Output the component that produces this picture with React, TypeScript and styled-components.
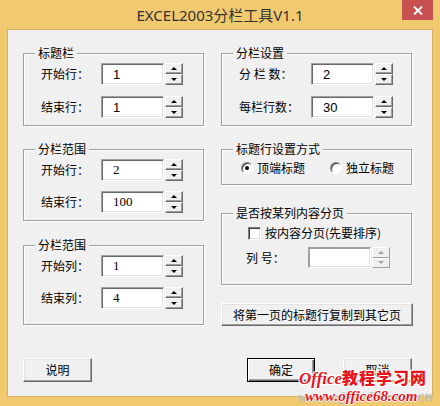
import React from "react";
import styled, { createGlobalStyle } from "styled-components";

const Global = createGlobalStyle`
  html, body { margin: 0; padding: 0; background: #ffffff; }
  body {
    font-family: "Noto Sans CJK SC", "Noto Sans", sans-serif;
    font-size: 12px;
    color: #000000;
  }
`;

const Window = styled.div`
  position: relative;
  width: 440px;
  height: 406px;
  box-sizing: border-box;
  background: #f1c96f;
  display: flex;
  flex-direction: column;
  padding: 0 7px 9px 7px;
`;

const TitleBar = styled.div`
  height: 29px;
  display: grid;
  grid-template-columns: 31px 1fr 31px;
  align-items: start;
  flex-shrink: 0;
`;

const TitleText = styled.div`
  grid-column: 2;
  height: 29px;
  display: flex;
  align-items: center;
  justify-content: center;
  font-family: "Noto Sans", "Noto Sans CJK SC", sans-serif;
  font-size: 15px;
  color: #333333;
`;

const CloseButton = styled.div`
  grid-column: 3;
  height: 20px;
  background: #c75050;
  display: flex;
  align-items: center;
  justify-content: center;
`;

const Client = styled.div`
  flex: 1;
  background: #f0f0f0;
  border: 1px solid #d6b266;
  display: flex;
  flex-direction: column;
  padding: 23px 20px 0 15px;
`;

const Columns = styled.div`
  display: flex;
  gap: 17px;
  align-items: flex-start;
`;

const Column = styled.div<{ $w: number }>`
  width: ${(p) => p.$w}px;
  display: flex;
  flex-direction: column;
`;

const Group = styled.div<{ $h: number; $mt?: number; $pt: number; $pl: number; $gap?: number }>`
  position: relative;
  box-sizing: border-box;
  height: ${(p) => p.$h}px;
  margin-top: ${(p) => p.$mt ?? 0}px;
  border: 1px solid #a0a0a0;
  box-shadow: inset 1px 1px 0 #ffffff, 1px 1px 0 #ffffff;
  padding: ${(p) => p.$pt}px 0 0 ${(p) => p.$pl}px;
  display: flex;
  flex-direction: column;
  gap: ${(p) => p.$gap ?? 0}px;
`;

const Legend = styled.span`
  position: absolute;
  top: -9px;
  left: 11px;
  padding: 0 3px;
  line-height: 16px;
  background: #f0f0f0;
  white-space: nowrap;
`;

const Row = styled.div<{ $h?: number; $ml?: number; $mt?: number }>`
  display: flex;
  align-items: center;
  height: ${(p) => p.$h ?? 22}px;
  margin-left: ${(p) => p.$ml ?? 0}px;
  margin-top: ${(p) => p.$mt ?? 0}px;
`;

const Label = styled.span<{ $w: number }>`
  width: ${(p) => p.$w}px;
  flex-shrink: 0;
  white-space: pre;
  line-height: 16px;
`;

const Edit = styled.div<{ $serif?: boolean; $h?: number; $disabled?: boolean }>`
  box-sizing: border-box;
  width: 63px;
  height: ${(p) => p.$h ?? 22}px;
  background: #ffffff;
  border-style: solid;
  border-width: 1px;
  border-color: #a0a0a0 #ffffff #ffffff #a0a0a0;
  box-shadow: ${(p) =>
    p.$disabled
      ? "inset 1px 1px 0 #a0a0a0, inset -1px -1px 0 #e3e3e3"
      : "inset 1px 1px 0 #696969, inset -1px -1px 0 #e3e3e3"};
  padding-left: 11px;
  display: flex;
  align-items: center;
  font-family: ${(p) =>
    p.$serif ? `"Liberation Serif", "DejaVu Serif", serif` : `"Liberation Sans", Arial, sans-serif`};
  font-size: 13px;
`;

const Spin = styled.div<{ $h?: number }>`
  width: 18px;
  height: ${(p) => p.$h ?? 22}px;
  margin-left: 1px;
  display: flex;
  flex-direction: column;
`;

const SpinHalf = styled.div<{ $disabled?: boolean }>`
  flex: 1;
  box-sizing: border-box;
  background: #f0f0f0;
  border-style: solid;
  border-width: 1px;
  border-color: ${(p) =>
    p.$disabled ? "#ffffff #a0a0a0 #a0a0a0 #ffffff" : "#ffffff #696969 #696969 #ffffff"};
  box-shadow: ${(p) => (p.$disabled ? "none" : "inset -1px -1px 0 #a0a0a0")};
  display: flex;
  align-items: center;
  justify-content: center;
`;

const Arrow = styled.span<{ $up: boolean; $disabled?: boolean }>`
  width: 0;
  height: 0;
  border-left: 3px solid transparent;
  border-right: 3px solid transparent;
  ${(p) =>
    p.$up
      ? `border-bottom: 3px solid ${p.$disabled ? "#a0a0a0" : "#000"};`
      : `border-top: 3px solid ${p.$disabled ? "#a0a0a0" : "#000"};`}
`;

const RadioCircle = styled.span<{ $checked?: boolean }>`
  box-sizing: border-box;
  width: 12px;
  height: 12px;
  border-radius: 50%;
  border: 1px solid;
  border-color: #808080 #ffffff #ffffff #808080;
  background: #ffffff;
  box-shadow: inset 1px 1px 0 #404040;
  display: flex;
  align-items: center;
  justify-content: center;
  flex-shrink: 0;
  &::after {
    content: "";
    width: 4px;
    height: 4px;
    border-radius: 50%;
    background: ${(p) => (p.$checked ? "#000" : "transparent")};
  }
`;

const Option = styled.span<{ $ml?: number }>`
  display: flex;
  align-items: center;
  gap: 4px;
  margin-left: ${(p) => p.$ml ?? 0}px;
  line-height: 16px;
`;

const CheckBox = styled.span`
  box-sizing: border-box;
  width: 13px;
  height: 13px;
  background: #ffffff;
  border: 1px solid;
  border-color: #808080 #ffffff #ffffff #808080;
  box-shadow: inset 1px 1px 0 #404040, inset -1px -1px 0 #e3e3e3;
  flex-shrink: 0;
`;

const Button = styled.div<{ $w: number; $h: number; $mt?: number; $default?: boolean; $ml?: number }>`
  box-sizing: border-box;
  width: ${(p) => p.$w}px;
  height: ${(p) => p.$h}px;
  margin-top: ${(p) => p.$mt ?? 0}px;
  margin-left: ${(p) => p.$ml ?? 0}px;
  background: #f0f0f0;
  border: 1px solid;
  border-color: ${(p) => (p.$default ? "#000 #000 #000 #000" : "#ffffff #696969 #696969 #ffffff")};
  box-shadow: ${(p) =>
    p.$default
      ? "inset 1px 1px 0 #ffffff, inset -1px -1px 0 #696969, inset -2px -2px 0 #a0a0a0"
      : "inset -1px -1px 0 #a0a0a0, inset 1px 1px 0 #e3e3e3"};
  display: flex;
  align-items: center;
  justify-content: center;
  line-height: 16px;
  white-space: nowrap;
`;

const BottomBar = styled.div`
  display: flex;
  align-items: flex-start;
  margin-top: 32px;
`;

const Spacer = styled.div`
  flex: 1;
`;

const Watermark = styled.div`
  position: absolute;
  left: 299px;
  top: 368px;
  display: flex;
  flex-direction: column;
  pointer-events: none;
`;

const MarkMain = styled.div`
  font-family: "Liberation Serif", "Noto Sans CJK SC", serif;
  font-weight: bold;
  font-style: italic;
  font-size: 17px;
  line-height: 18px;
  color: #e8141e;
  white-space: nowrap;
  text-shadow: 1px 1px 0 #ffffff, -1px -1px 0 #ffffff, 1px -1px 0 #ffffff, -1px 1px 0 #ffffff;
`;

const MarkCjk = styled.span`
  font-family: "Noto Sans CJK SC", sans-serif;
  font-style: normal;
  font-weight: 900;
  font-size: 16px;
  letter-spacing: 1px;
`;

const MarkUrl = styled.div`
  margin-top: 1px;
  padding-left: 6px;
  font-family: "Liberation Serif", serif;
  font-weight: bold;
  font-style: italic;
  font-size: 15px;
  line-height: 15px;
  white-space: nowrap;
  color: #e8141e;
  text-shadow: 1px 0 0 #fff, -1px 0 0 #fff, 0 1px 0 #fff, 0 -1px 0 #fff, -7px 1px 0 #bdbdbd;
`;

const MarkTail = styled.span`
  color: #bdbdbd;
  text-shadow: none;
`;

type SpinEditProps = { value: string; serif?: boolean; h?: number; disabled?: boolean };

function SpinEdit({ value, serif, h, disabled }: SpinEditProps) {
  return (
    <>
      <Edit $serif={serif} $h={h} $disabled={disabled}>
        {value}
      </Edit>
      <Spin $h={h}>
        <SpinHalf $disabled={disabled}>
          <Arrow $up $disabled={disabled} />
        </SpinHalf>
        <SpinHalf $disabled={disabled}>
          <Arrow $up={false} $disabled={disabled} />
        </SpinHalf>
      </Spin>
    </>
  );
}

export default function App() {
  return (
    <>
      <Global />
      <Window>
        <TitleBar>
          <TitleText>EXCEL2003分栏工具V1.1</TitleText>
          <CloseButton>
            <svg width="10" height="9" viewBox="0 0 10 9">
              <path d="M1 0.5 L9 8.5 M9 0.5 L1 8.5" stroke="#ffffff" strokeWidth="1.8" />
            </svg>
          </CloseButton>
        </TitleBar>
        <Client>
          <Columns>
            <Column $w={183}>
              <Group $h={73} $pt={9} $pl={17} $gap={11}>
                <Legend>标题栏</Legend>
                <Row>
                  <Label $w={60}>开始行：</Label>
                  <SpinEdit value="1" />
                </Row>
                <Row>
                  <Label $w={60}>结束行：</Label>
                  <SpinEdit value="1" />
                </Row>
              </Group>
              <Group $h={72} $mt={23} $pt={9} $pl={17} $gap={10}>
                <Legend>分栏范围</Legend>
                <Row>
                  <Label $w={60}>开始行：</Label>
                  <SpinEdit value="2" serif />
                </Row>
                <Row>
                  <Label $w={60}>结束行：</Label>
                  <SpinEdit value="100" serif />
                </Row>
              </Group>
              <Group $h={80} $mt={24} $pt={9} $pl={17} $gap={10}>
                <Legend>分栏范围</Legend>
                <Row>
                  <Label $w={60}>开始列：</Label>
                  <SpinEdit value="1" serif />
                </Row>
                <Row>
                  <Label $w={60}>结束列：</Label>
                  <SpinEdit value="4" serif />
                </Row>
              </Group>
            </Column>
            <Column $w={191}>
              <Group $h={73} $pt={9} $pl={17} $gap={11}>
                <Legend>分栏设置</Legend>
                <Row>
                  <Label $w={72}>分 栏 数：</Label>
                  <SpinEdit value="2" />
                </Row>
                <Row>
                  <Label $w={72}>每栏行数：</Label>
                  <SpinEdit value="30" />
                </Row>
              </Group>
              <Group $h={36} $mt={23} $pt={11} $pl={19}>
                <Legend>标题行设置方式</Legend>
                <Row $h={14}>
                  <Option>
                    <RadioCircle $checked />
                    顶端标题
                  </Option>
                  <Option $ml={25}>
                    <RadioCircle />
                    独立标题
                  </Option>
                </Row>
              </Group>
              <Group $h={72} $mt={28} $pt={12} $pl={24}>
                <Legend>是否按某列内容分页</Legend>
                <Row $h={14} $ml={2}>
                  <Option>
                    <CheckBox />
                    按内容分页(先要排序)
                  </Option>
                </Row>
                <Row $h={21} $mt={7}>
                  <Label $w={62}>列 号：</Label>
                  <SpinEdit value="" h={21} disabled />
                </Row>
              </Group>
              <Button $w={192} $h={23} $mt={18}>
                将第一页的标题行复制到其它页
              </Button>
            </Column>
          </Columns>
          <BottomBar>
            <Button $w={69} $h={24}>
              说明
            </Button>
            <Spacer />
            <Button $w={68} $h={24} $default>
              确定
            </Button>
            <Button $w={69} $h={24} $ml={28}>
              取消
            </Button>
          </BottomBar>
        </Client>
        <Watermark>
          <MarkMain>
            Office<MarkCjk>教程学习网</MarkCjk>
          </MarkMain>
          <MarkUrl>
            www.office68.com<MarkTail>cn</MarkTail>
          </MarkUrl>
        </Watermark>
      </Window>
    </>
  );
}
